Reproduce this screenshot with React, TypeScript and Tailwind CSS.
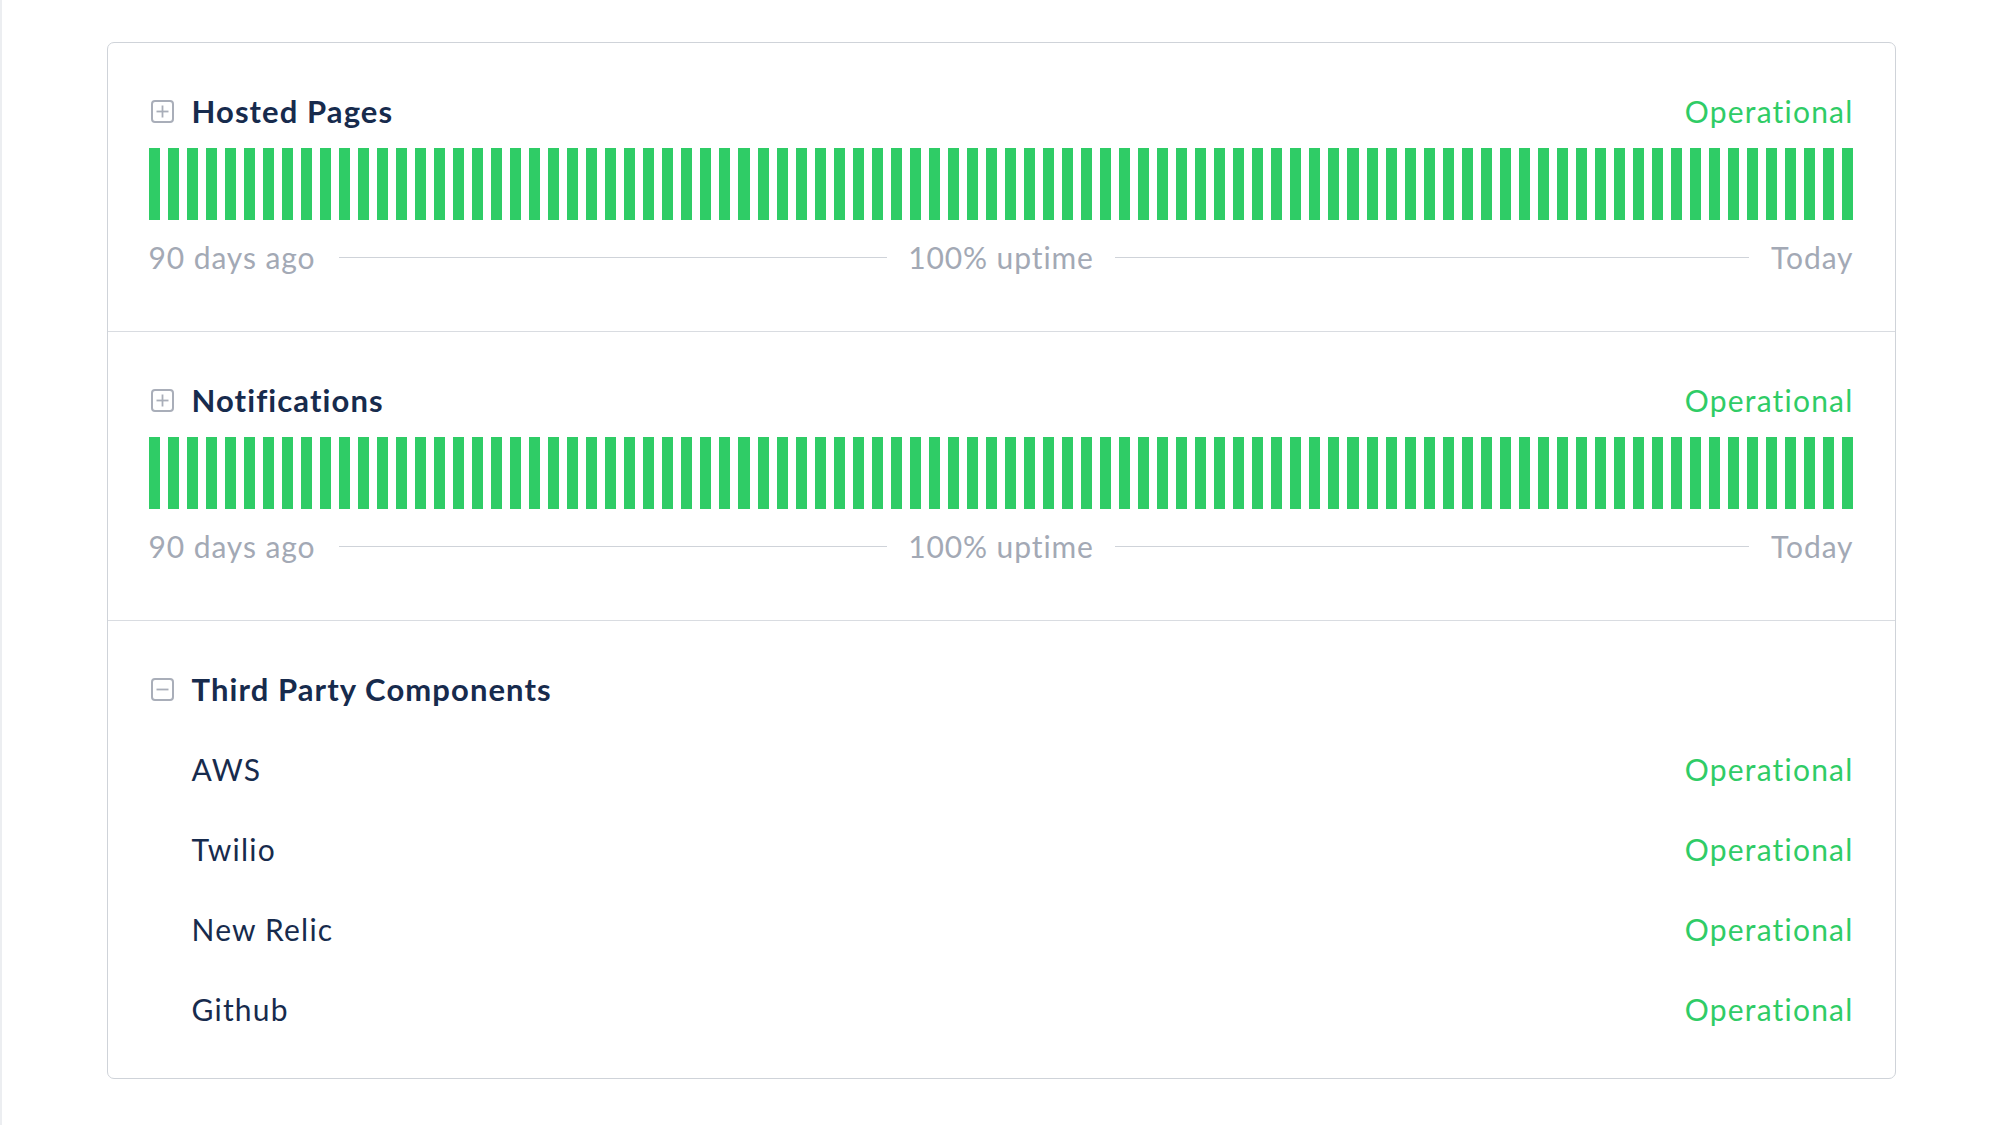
const font = { fontFamily: 'Lato, "Noto Sans", sans-serif' };

function BoxIcon({ open }: { open: boolean }) {
  return (
    <svg width="23" height="23" viewBox="0 0 23 23" fill="none" className="ml-[2px] shrink-0">
      <rect x="1" y="1" width="21" height="21" rx="3" stroke="#a9aeb9" strokeWidth="2" />
      <path d="M5.5 11.5h12" stroke="#a9aeb9" strokeWidth="1.8" />
      {!open && <path d="M11.5 5.5v12" stroke="#a9aeb9" strokeWidth="1.8" />}
    </svg>
  );
}

function Uptime({ name }: { name: string }) {
  const days = Array.from({ length: 90 });
  return (
    <div className="border-b border-[#d9dce1] px-[41px] pt-[50px] pb-[52px]">
      <div className="flex h-[36px] items-center justify-between">
        <div className="flex items-center gap-[18px]">
          <BoxIcon open={false} />
          <span className="text-[31px] font-bold tracking-[0.035em] text-[#172b4d]">{name}</span>
        </div>
        <span className="text-[30px] tracking-[0.04em] text-[#2fcc66]">Operational</span>
      </div>
      <div className="mt-[19px] flex h-[72px] gap-[8px]">
        {days.map((_, i) => (
          <div key={i} className="flex-1 bg-[#2fcc66]" />
        ))}
      </div>
      <div className="mt-[15px] grid h-[36px] grid-cols-[1fr_auto_1fr] items-center gap-[21px] text-[30px] tracking-[0.03em] text-[#a3a9b5]">
        <div className="flex items-center gap-[24px]">
          <span>90 days ago</span>
          <div className="h-px flex-1 bg-[#cfd3d9]" />
        </div>
        <span>100% uptime</span>
        <div className="flex items-center gap-[22px]">
          <div className="h-px flex-1 bg-[#cfd3d9]" />
          <span>Today</span>
        </div>
      </div>
      <div className="h-[8px]" />
    </div>
  );
}

export default function App() {
  const items = ["AWS", "Twilio", "New Relic", "Github"];
  return (
    <div className="min-h-[1125px] w-full border-l-2 border-[#eceef1] bg-white pt-[42px]" style={font}>
      <div className="mx-auto w-[1789px] rounded-[7px] border border-[#cfd3d9]">
        <Uptime name="Hosted Pages" />
        <Uptime name="Notifications" />
        <div className="px-[41px] pt-[50px] pb-[29px]">
          <div className="flex h-[36px] items-center gap-[18px]">
            <BoxIcon open />
            <span className="text-[31px] font-bold tracking-[0.035em] text-[#172b4d]">Third Party Components</span>
          </div>
          <div className="mt-[22px]">
            {items.map((it) => (
              <div key={it} className="flex h-[80px] items-center justify-between pl-[43px]">
                <span className="text-[30px] tracking-[0.04em] text-[#172b4d]">{it}</span>
                <span className="text-[30px] tracking-[0.04em] text-[#2fcc66]">Operational</span>
              </div>
            ))}
          </div>
        </div>
      </div>
    </div>
  );
}
